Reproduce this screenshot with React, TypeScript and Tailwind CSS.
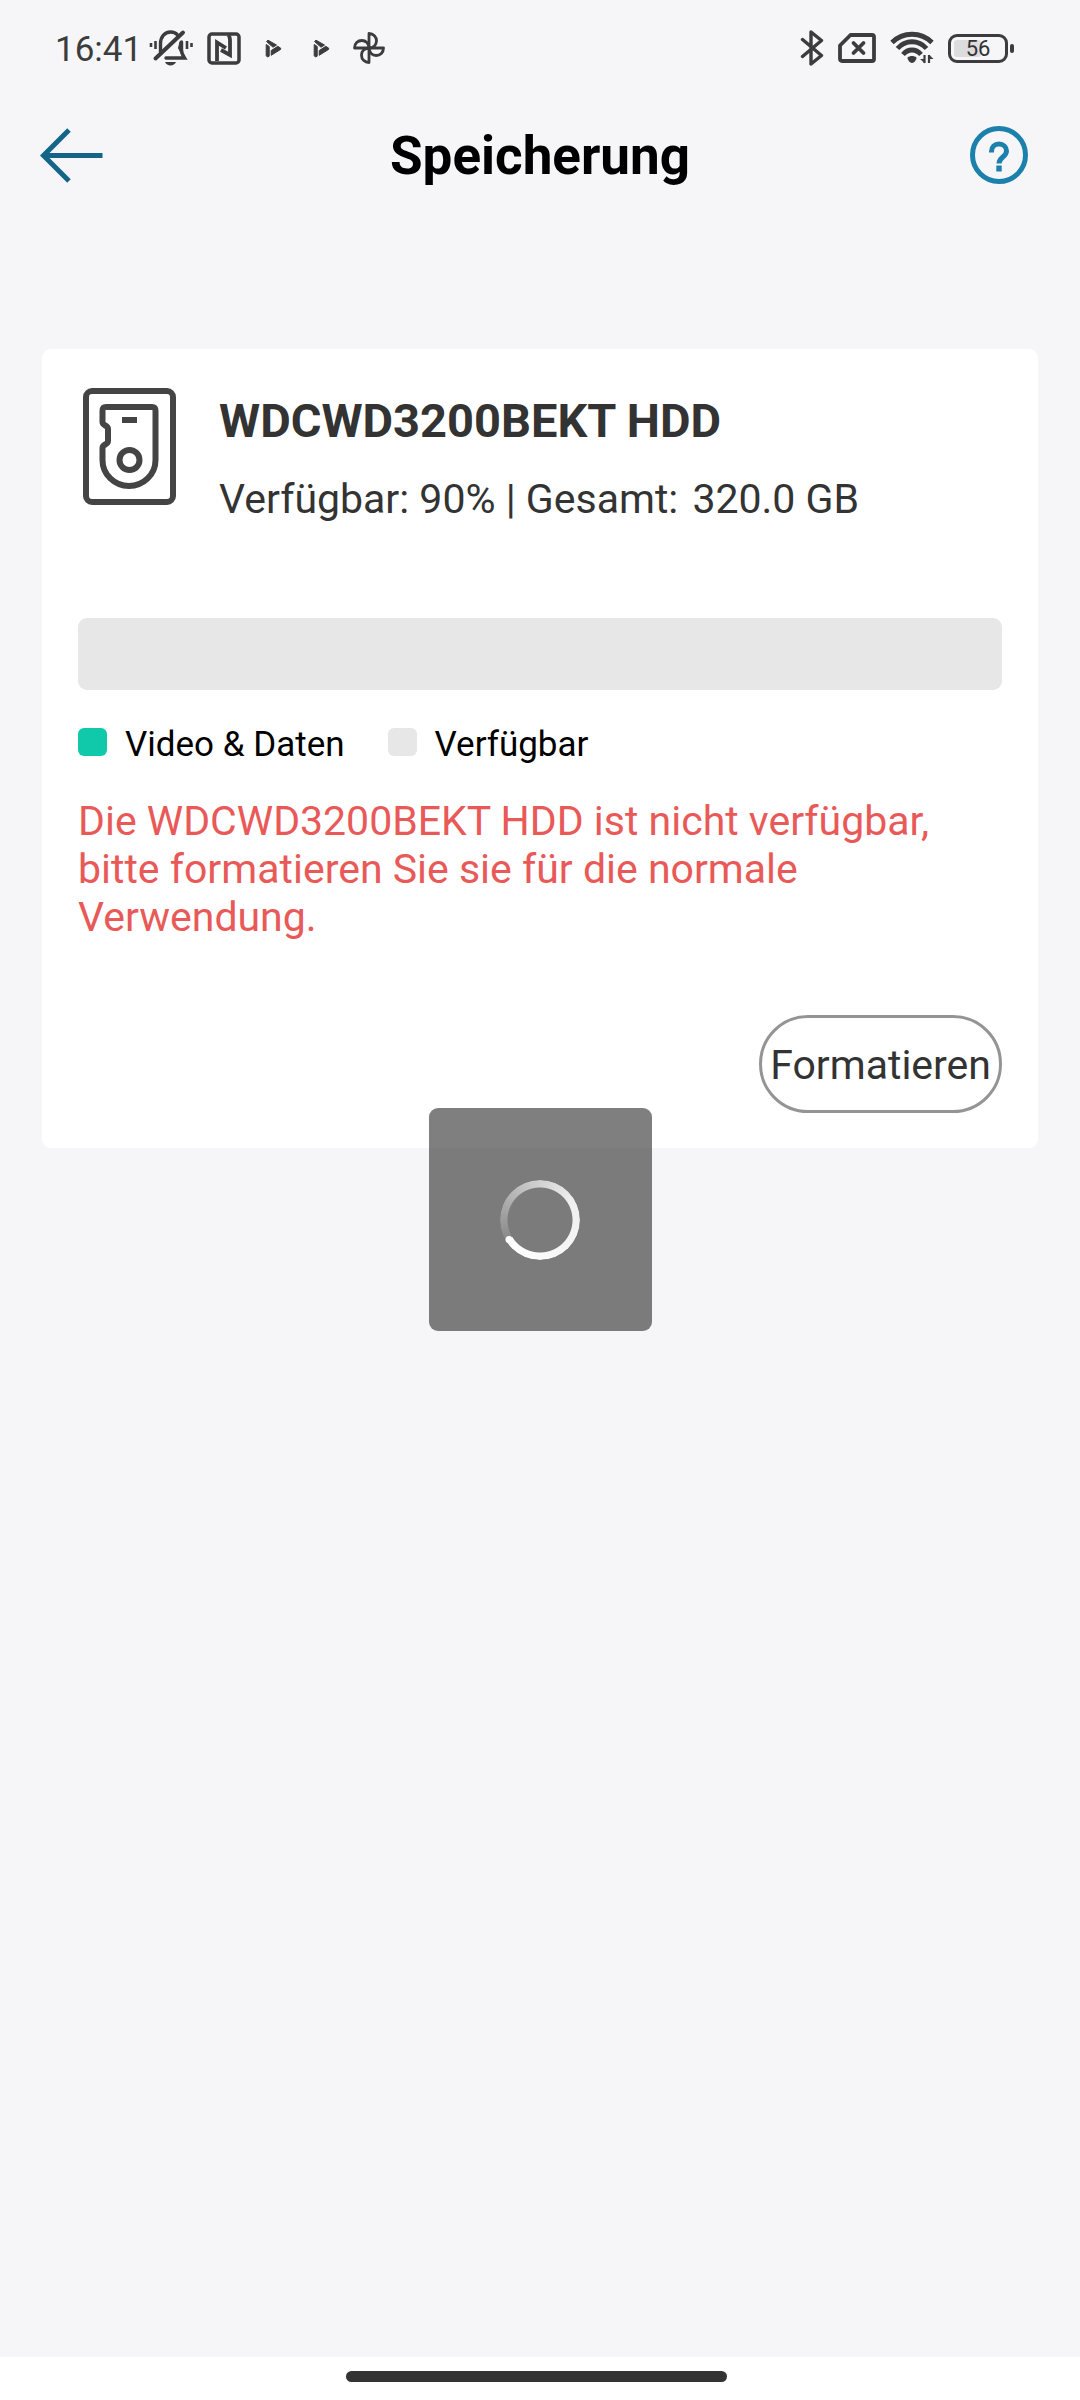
import { ReactElement, ReactNode } from 'react';

function BellOffIcon(): ReactElement {
  return (
    <svg width="44" height="38" viewBox="0 0 44 38" fill="none" stroke="#3c3c3c" strokeLinecap="round" aria-hidden="true">
      <path d="M11.500 23V14.500C11.500 8 15.500 3 21.500 3c3 0 5.500 1 7 3" strokeWidth="3.400" />
      <path d="M32.500 13v8c0 3 1 5 3 8H17" strokeWidth="3.400" />
      <path d="M31 13l-1.500 6 3.500 7z" fill="#3c3c3c" strokeWidth="1" />
      <path d="M6.500 29.500L34 3.500" strokeWidth="4" />
      <path d="M2 14v4M6.500 12v8M38 12v8M42.500 14v4" strokeWidth="2.600" strokeLinecap="butt" />
      <path d="M16 33h11c-1 2-3 3.500-5.500 3.500S17 35 16 33z" fill="#3c3c3c" stroke="none" />
    </svg>
  );
}

function NfcIcon(): ReactElement {
  return (
    <svg width="34" height="33" viewBox="0 0 34 33" fill="none" stroke="#3c3c3c" aria-hidden="true">
      <rect x="2" y="2" width="30" height="29" rx="3" strokeWidth="3.500" />
      <path d="M10 29V10.500l9 5.500" strokeWidth="3.800" />
      <path d="M21.500 3c1 1.500 1.500 3 1.500 5v15l-9-5" strokeWidth="3.800" />
    </svg>
  );
}

function PlayIcon(): ReactElement {
  return (
    <svg width="17" height="19" viewBox="0 0 17 19" fill="#3c3c3c" stroke="#3c3c3c" strokeLinejoin="round" aria-hidden="true">
      <path d="M1.500 2.500L3 1.200 11.500 6 8 8.200z" />
      <path d="M1.200 5.500l3 1.900v9.800l-1.700 0.800-1.300-1.300z" />
      <path d="M12.800 7.300l3 2-0.300 1.200-9.300 5.800V11.600z" />
    </svg>
  );
}

function PinwheelIcon(): ReactElement {
  return (
    <svg width="32" height="32" viewBox="0 0 32 32" fill="none" stroke="#3c3c3c" strokeWidth="2.800" strokeLinejoin="round" aria-hidden="true">
      <path d="M16 16V1.500c4.500 0 7.500 3.300 7.500 7.300S20.500 16 16 16z" />
      <path d="M16 16h14.500c0 4.500-3.300 7.500-7.300 7.500S16 20.500 16 16z" />
      <path d="M16 16v14.500c-4.500 0-7.500-3.300-7.500-7.300S11.500 16 16 16z" />
      <path d="M16 16H1.500c0-4.500 3.300-7.500 7.300-7.500S16 11.500 16 16z" />
    </svg>
  );
}

function BluetoothIcon(): ReactElement {
  return (
    <svg width="24" height="36" viewBox="0 0 24 36" fill="none" stroke="#3c3c3c" strokeWidth="3.400" strokeLinecap="round" strokeLinejoin="round" aria-hidden="true">
      <path d="M2.500 9.500L21.500 25.500 11 34V2l10.500 8.500L2.500 26.500" />
    </svg>
  );
}

function SimOffIcon(): ReactElement {
  return (
    <svg width="38" height="30" viewBox="0 0 38 30" fill="none" stroke="#3c3c3c" strokeLinejoin="round" aria-hidden="true">
      <path d="M12.500 2H34c1.300 0 2 0.700 2 2v22c0 1.300-0.700 2-2 2H4c-1.300 0-2-0.700-2-2V12.500z" strokeWidth="3.800" />
      <path d="M15.500 10l10 10M25.500 10l-10 10" strokeWidth="3.800" strokeLinecap="round" />
    </svg>
  );
}

function WifiIcon(): ReactElement {
  return (
    <svg width="44" height="34" viewBox="0 0 44 34" fill="none" stroke="#3c3c3c" strokeWidth="4.800" aria-hidden="true">
      <path d="M2 11.500C13 0.500 31 0.500 42 11.500" />
      <path d="M7.500 17.500c8-9 21-9 29 0" />
      <path d="M13 23.500c5-6 13-6 18 0" />
      <path d="M17.500 26.500c2.500-2 6.500-2 9 0 0 2.500-2.500 5.500-4.500 5.500s-4.500-3-4.500-5.500z" fill="#3c3c3c" stroke="none" />
      <path d="M34.500 24v8M39 32v-8" strokeWidth="2.200" />
      <path d="M35 32.500l-5-4.500h5zM39 23.500l4.500 4.500H39z" fill="#3c3c3c" stroke="none" />
    </svg>
  );
}

function BackIcon(): ReactElement {
  return (
    <svg width="64" height="56" viewBox="0 0 64 56" fill="none" stroke="#146487" strokeWidth="5" aria-hidden="true">
      <path d="M29 2L3.500 27.500 29 53M5 27.500h57.500" />
    </svg>
  );
}

function HelpIcon(): ReactElement {
  return (
    <svg width="58" height="58" viewBox="0 0 58 58" fill="none" stroke="#1b80ab" aria-hidden="true">
      <circle cx="29" cy="29" r="26.500" strokeWidth="5" />
      <path d="M21.500 26.500v-1c0-4.500 3.200-7.500 7.500-7.500s7.500 3 7.500 7c0 6-7.500 6-7.500 12.500" strokeWidth="5" />
      <path d="M29 39.500v6" strokeWidth="5.400" />
    </svg>
  );
}

function DiskIcon(): ReactElement {
  return (
    <svg width="94" height="118" viewBox="0 0 94 118" fill="none" stroke="#444444" strokeWidth="6" aria-hidden="true">
      <rect x="3" y="4" width="87" height="111" rx="6" />
      <path d="M19.500 33V24c0-3 1-4 3.500-4h46c2.500 0 3.500 1 3.500 4v49c0 14.500-12 26-26.500 26S19.500 87.500 19.500 73V61c0-4 5.500-3 5.500-7V42c0-4-5.500-3-5.500-7v-2" strokeLinejoin="round" />
      <path d="M39 33h15" />
      <circle cx="46.500" cy="73" r="10" />
    </svg>
  );
}

function Battery({ level }: { level: number }): ReactElement {
  return (
    <div className="flex items-center gap-0.5">
      <div className="relative flex h-[29px] w-[60px] items-center justify-center rounded-[9px] border-3 border-[#3c3c3c]">
        <div className="absolute inset-[3px]">
          <div className="h-full rounded-[3px] bg-[#dcdcde]" style={{ width: `${level}%` }} />
        </div>
        <span className="relative pt-0.5 text-[22px] leading-none text-[#333333]">{level}</span>
      </div>
      <div className="h-[9px] w-1 rounded-sm bg-[#3c3c3c]" />
    </div>
  );
}

function StatusBar(): ReactElement {
  return (
    <div className="flex h-[82px] items-center justify-between pt-3.5 pr-[66px] pl-[55px]">
      <div className="flex items-center">
        <span className="pt-0.5 text-[35px] leading-none text-[#3c3c3c]">16:41</span>
        <div className="ml-[7px] flex items-center gap-3.5">
          <BellOffIcon />
          <NfcIcon />
        </div>
        <div className="ml-6 flex items-center gap-[31px]">
          <PlayIcon />
          <PlayIcon />
        </div>
        <div className="ml-[23px]">
          <PinwheelIcon />
        </div>
      </div>
      <div className="flex items-center gap-3.5">
        <BluetoothIcon />
        <SimOffIcon />
        <WifiIcon />
        <Battery level={56} />
      </div>
    </div>
  );
}

function LegendItem({ color, children }: { color: string; children: ReactNode }): ReactElement {
  return (
    <li className="flex items-center gap-[18px]">
      <span className={`mb-1.5 h-7 w-[29px] rounded-md ${color}`} />
      <span>{children}</span>
    </li>
  );
}

function StorageCard(): ReactElement {
  return (
    <section className="mx-[42px] mt-[119px] rounded-[9px] bg-white px-9 pt-9 pb-[35px]">
      <div className="flex items-start gap-[42px] pl-[5px]">
        <div className="pt-0.5">
          <DiskIcon />
        </div>
        <div className="text-[#333333]">
          <h2 className="mt-2 text-[47px] leading-[56px] font-bold">WDCWD3200BEKT HDD</h2>
          <p className="mt-[26px] text-[41px] leading-12">
            Verfügbar: 90% | Gesamt: <span className="ml-1">320.0 GB</span>
          </p>
        </div>
      </div>
      <div className="mt-[95px] h-[72px] rounded-[9px] bg-[#e7e7e7]" />
      <ul className="mt-[34px] flex gap-[43px] text-[35px] leading-[42px] text-black">
        <LegendItem color="bg-[#10c9ab]">Video &amp; Daten</LegendItem>
        <LegendItem color="bg-[#e7e7e7]">Verfügbar</LegendItem>
      </ul>
      <p className="mt-[31px] text-[41px] leading-12 text-[#e85958]">
        Die WDCWD3200BEKT HDD ist nicht verfügbar, bitte formatieren Sie sie für die normale Verwendung.
      </p>
      <div className="mt-[74px] flex justify-end">
        <button type="button" className="h-[98px] rounded-full border-3 border-[#949494] px-2 pt-1 text-[41px] text-[#333333]">
          Formatieren
        </button>
      </div>
    </section>
  );
}

function LoadingOverlay(): ReactElement {
  return (
    <div role="status" aria-label="Laden" className="absolute inset-0 flex items-center justify-center">
      <div className="flex size-[223px] items-center justify-center rounded-[9px] bg-black/50">
        <div className="relative size-20">
          <div className="size-full rounded-full bg-[conic-gradient(from_238deg,rgba(255,255,255,0.1),rgba(255,255,255,0.6)_30%,rgba(255,255,255,0.88)_50%,#ffffff)] [mask:radial-gradient(circle,transparent_32px,black_33px)]" />
          <svg className="absolute inset-0" viewBox="0 0 80 80" aria-hidden="true">
            <circle cx="9" cy="59.500" r="3.500" fill="#ffffff" />
          </svg>
        </div>
      </div>
    </div>
  );
}

export default function App(): ReactElement {
  return (
    <div className="flex min-h-screen flex-col bg-[#f6f6f9] font-['Roboto',sans-serif]">
      <StatusBar />
      <main className="relative flex-1">
        <header className="flex h-[148px] items-center justify-between pr-[52px] pl-10">
          <button type="button" aria-label="Zurück" className="w-[70px]">
            <BackIcon />
          </button>
          <h1 className="pt-0.5 text-[53px] font-bold text-black">Speicherung</h1>
          <button type="button" aria-label="Hilfe" className="pb-0.5">
            <HelpIcon />
          </button>
        </header>
        <StorageCard />
        <LoadingOverlay />
      </main>
      <footer className="flex h-[43px] justify-center bg-white pt-3.5 pr-[7px]">
        <div className="h-[11px] w-[381px] rounded-full bg-[#333333]" />
      </footer>
    </div>
  );
}
